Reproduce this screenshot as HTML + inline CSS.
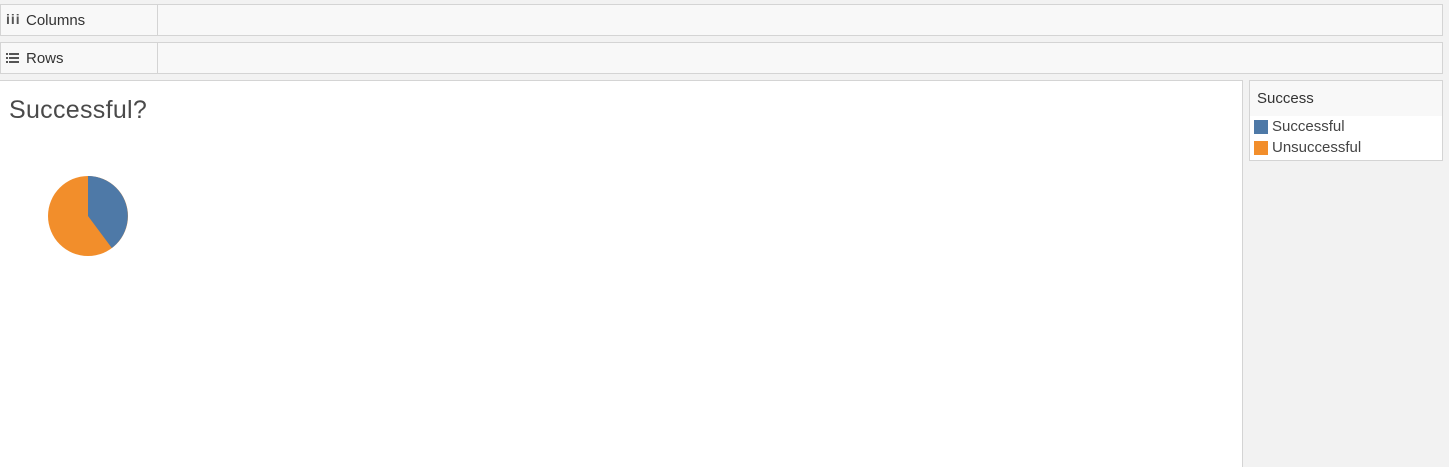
<!DOCTYPE html>
<html><head><style>
body{margin:0;width:1449px;height:466px;background:#f2f2f2;font-family:"Liberation Sans",sans-serif;position:relative;overflow:hidden;color:#333}
.shelf{position:absolute;left:0;width:1441px;height:30px;background:#f8f8f8;border:1px solid #d4d4d4}
.shelf .lab{position:absolute;left:25px;top:7px;font-size:15px;color:#333}
.shelf .div{position:absolute;left:156px;top:0;bottom:0;border-left:1px solid #d4d4d4}
.canvas{position:absolute;left:0;top:80px;width:1242px;height:386px;background:#fff;border-top:1px solid #d4d4d4;border-right:1px solid #d4d4d4}
.legend{position:absolute;left:1249px;top:80px;width:192px;height:79px;background:#fff;border:1px solid #d4d4d4}
</style></head><body>
<div class="shelf" style="top:4px"><span style="position:absolute;left:5px;top:6px;font-size:14px;font-weight:bold;color:#555;letter-spacing:1px">iii</span><span class="lab">Columns</span><div class="div"></div></div>
<div class="shelf" style="top:42px"><svg style="position:absolute;left:5px;top:10px" width="13" height="10"><g fill="#555"><rect x="0" y="0" width="2" height="2"/><rect x="3" y="0" width="10" height="2"/><rect x="0" y="4" width="2" height="2"/><rect x="3" y="4" width="10" height="2"/><rect x="0" y="8" width="2" height="2"/><rect x="3" y="8" width="10" height="2"/></g></svg><span class="lab">Rows</span><div class="div"></div></div>
<div class="canvas">
<div style="position:absolute;left:9px;top:15px;font-size:25px;color:#4a4a4a;letter-spacing:0.3px">Successful?</div>
<svg style="position:absolute;left:0;top:0" width="200" height="200"><circle cx="88" cy="135" r="40" fill="#f28e2b"/><path d="M88 135 L88 95 A40 40 0 0 1 111.8 167 Z" fill="#4e79a7"/></svg>
</div>
<div class="legend">
<div style="height:35px;background:#f8f8f8;font-size:15px;padding:9px 0 0 7px;box-sizing:border-box">Success</div>
<div style="position:absolute;left:4px;top:39px;width:14px;height:14px;background:#4e79a7"></div>
<div style="position:absolute;left:22px;top:37px;font-size:15px;color:#444">Successful</div>
<div style="position:absolute;left:4px;top:60px;width:14px;height:14px;background:#f28e2b"></div>
<div style="position:absolute;left:22px;top:58px;font-size:15px;color:#444">Unsuccessful</div>
</div>
</body></html>
